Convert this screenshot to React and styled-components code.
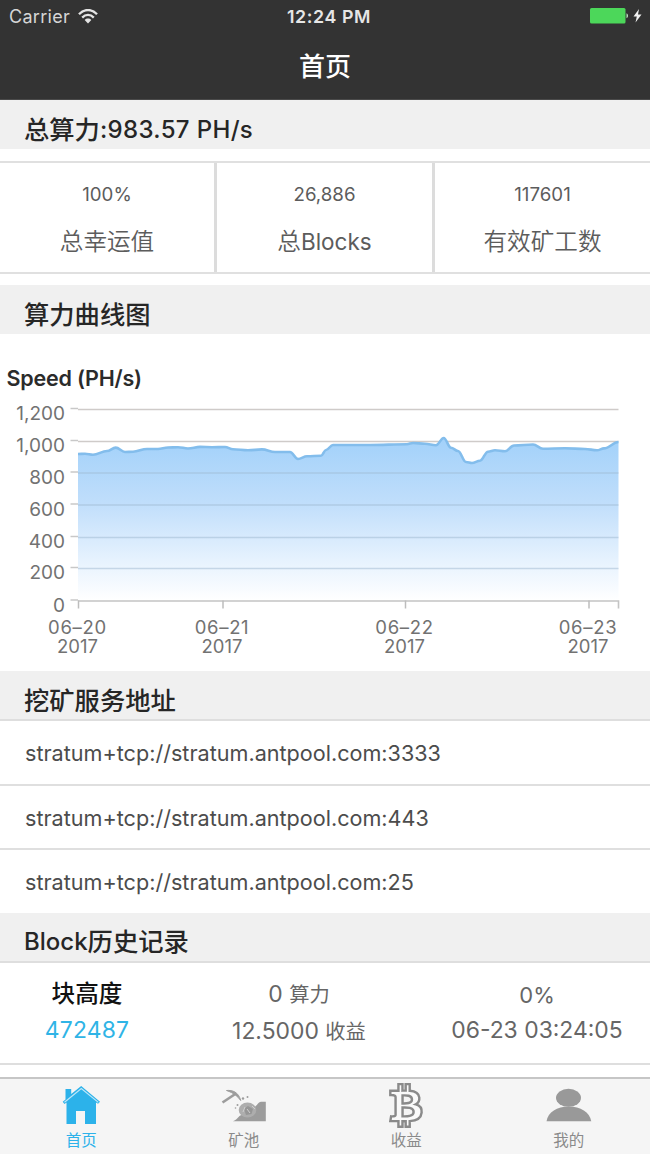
import React from "react";
import styled, { createGlobalStyle } from "styled-components";
import { FaBtc } from "react-icons/fa";

const GlobalStyle = createGlobalStyle`
  * {
    box-sizing: border-box;
  }
  body {
    margin: 0;
    background: #fff;
    font-family: Inter, "Noto Sans CJK SC", sans-serif;
  }
`;

const StyledPage = styled.div`
  display: flex;
  flex-direction: column;
  width: 650px;
  height: 1154px;
  overflow: hidden;
  background: #fff;
`;

const StyledHeader = styled.header`
  height: 100px;
  background: #333;
  color: #fff;
  border-bottom: 1px solid #4a4a4a;
`;

const StyledStatusBar = styled.div`
  display: grid;
  grid-template-columns: 1fr auto 1fr;
  align-items: center;
  height: 32px;
  padding: 0 7px 0 9px;
`;

const StyledCarrier = styled.div`
  display: flex;
  align-items: center;
  column-gap: 8px;
  font-size: 18px;
  letter-spacing: 0.3px;
  color: #d6d6d6;
`;

const StyledClock = styled.div`
  padding-left: 6px;
  font-size: 17.8px;
  font-weight: 600;
  letter-spacing: 0.6px;
  color: #e6e6e6;
`;

const StyledBattery = styled.div`
  display: flex;
  justify-content: flex-end;
`;

const StyledTitle = styled.h1`
  margin: 0;
  font-size: 26px;
  font-weight: 500;
  line-height: 69px;
  text-align: center;
`;

const StyledSectionTitle = styled.h2`
  display: flex;
  align-items: center;
  flex-shrink: 0;
  height: ${(props) => (props.$lined ? 50 : 49)}px;
  margin: 0;
  padding: ${(props) => props.$top || 10}px 24px 0;
  background: #f0f0f0;
  border-bottom: ${(props) => (props.$lined ? "2px solid #dedede" : "none")};
  color: #262626;
  font-size: 25.3px;
  line-height: 36px;
  font-weight: 500;
`;

const StyledTotal = styled.span`
  font-size: 24px;
  font-weight: 500;
  letter-spacing: ${(props) => props.$spacing || 0}px;
`;

const StyledStats = styled.div`
  display: grid;
  grid-template-columns: 217px 218px 215px;
  flex-shrink: 0;
  height: 113px;
  margin: 12px 0 11px;
  border-top: 2px solid #e0e0e0;
  border-bottom: 2px solid #e0e0e0;
`;

const StyledStat = styled.div`
  display: flex;
  flex-direction: column;
  align-items: center;
  padding-top: 19px;
  border-right: 3px solid #dcdcdc;
  color: #5c5c5c;
  &:last-child {
    border-right: none;
  }
`;

const StyledStatValue = styled.span`
  font-size: 18.7px;
  line-height: 26px;
`;

const StyledStatLabel = styled.span`
  margin-top: 16px;
  font-size: 23.6px;
  line-height: 36px;
  font-weight: 350;
`;

const StyledLatin = styled.span`
  font-size: 22.5px;
  font-weight: 400;
`;

const StyledChart = styled.svg`
  display: block;
  flex-shrink: 0;
  font-family: Inter, sans-serif;
`;

const StyledAddress = styled.div`
  flex-shrink: 0;
  height: ${(props) => props.$height}px;
  padding-left: 25px;
  border-bottom: ${(props) => (props.$last ? "none" : "2px solid #dfdfdf")};
  color: #4c4c4c;
  font-size: 21.6px;
  line-height: 64px;
`;

const StyledBlock = styled.div`
  display: grid;
  grid-template-columns: 174px 250px 226px;
  flex-shrink: 0;
  height: 102px;
  padding-top: 13px;
  border-bottom: 2px solid #dedede;
`;

const StyledBlockColumn = styled.div`
  display: flex;
  flex-direction: column;
  align-items: center;
  color: #666;
  font-size: 22.9px;
  line-height: 36px;
  white-space: nowrap;
`;

const StyledBlockTitle = styled.span`
  font-size: 23.6px;
  font-weight: 500;
  color: #111;
`;

const StyledBlockHeight = styled.span`
  color: #2fb4e6;
  letter-spacing: 0.2px;
`;

const StyledPercent = styled.span`
  font-size: 22px;
  line-height: 38px;
  margin-bottom: -2px;
`;

const StyledUnit = styled.span`
  font-size: 20.3px;
`;

const StyledTabBar = styled.nav`
  display: grid;
  grid-template-columns: repeat(4, 1fr);
  flex-shrink: 0;
  height: 78px;
  margin-top: 12px;
  border-top: 2px solid #c6c6c6;
  background: #f5f5f5;
`;

const StyledTab = styled.div`
  display: flex;
  flex-direction: column;
  align-items: center;
  padding-top: 2px;
  color: ${(props) => (props.$active ? "#2cb2ea" : "#8a8a8a")};
  font-size: 15.5px;
  line-height: 18px;
`;

const StyledIconBox = styled.div`
  display: flex;
  justify-content: center;
  align-items: center;
  width: 60px;
  height: 48px;
  margin-bottom: 3px;
`;

const StyledBitcoin = styled(FaBtc)`
  width: 32px;
  height: 43px;
  overflow: visible;
  color: #fafafa;
  stroke: #8a8a8a;
  stroke-width: 29;
`;

const LEFT = 78;
const RIGHT = 618.5;
const BASE = 600.5;

const yTicks = [
  { label: "1,200", y: 409 },
  { label: "1,000", y: 441 },
  { label: "800", y: 472.5 },
  { label: "600", y: 504.5 },
  { label: "400", y: 537 },
  { label: "200", y: 568 },
  { label: "0", y: BASE },
];

const xTicks = [
  { label: "06–20", x: 78 },
  { label: "06–21", x: 222.5 },
  { label: "06–22", x: 405 },
  { label: "06–23", x: 588.5 },
];

const speed = [
  [78, 454], [85, 453.7], [93, 454.7], [107, 451], [115.7, 447.6], [125, 452],
  [133, 451.7], [147, 449], [158, 449], [168, 447.5], [178, 447.2],
  [188, 448.5], [200, 446.9], [212, 447.2], [225, 447], [233, 449.3],
  [248, 450.3], [262, 449.4], [275, 452], [290, 452], [298, 459], [307, 456.3],
  [321, 455.7], [326, 450], [333, 445], [370, 445], [407, 444.2], [413, 443],
  [425, 443.7], [436, 445.3], [443.7, 438], [451, 447.7], [458, 451],
  [466, 462], [472, 463], [480, 460.7], [488, 451.7], [495, 450.3],
  [505, 451.3], [514, 445.5], [533, 444.5], [543, 448.7], [565, 448.3],
  [585, 449], [597, 450.3], [604, 448.4], [618.5, 442],
];

// horizontal control points keep the curve from overshooting
function curve(points) {
  return points.reduce((d, [x, y], i) => {
    if (i === 0) return `M${x} ${y}`;
    const [px, py] = points[i - 1];
    const third = (x - px) * 0.38;
    return `${d}C${px + third} ${py} ${x - third} ${y} ${x} ${y}`;
  }, "");
}

function SpeedChart() {
  const line = curve(speed);
  return (
    <StyledChart width="650" height="337" viewBox="0 334 650 337">
      <defs>
        <linearGradient id="speedFill" x1="0" y1="0" x2="0" y2="1">
          <stop offset="0" stopColor="#a2d1fa" />
          <stop offset="0.4" stopColor="#c0defb" />
          <stop offset="0.75" stopColor="#e6f2fe" />
          <stop offset="1" stopColor="#ffffff" />
        </linearGradient>
      </defs>
      <text x="6.5" y="385.5" fontSize="21.5" fontWeight="600" fill="#2b2b2b" letterSpacing="-0.2">
        Speed (PH/s)
      </text>
      {yTicks.slice(0, 2).map(({ y }) => (
        <path key={y} d={`M${LEFT} ${y + 0.5}H${RIGHT}`} stroke="#cfcbc9" strokeWidth="1.6" />
      ))}
      <path d={`${line}V${BASE}H${LEFT}Z`} fill="url(#speedFill)" />
      {yTicks.slice(2, 6).map(({ y }) => (
        <path key={y} d={`M${LEFT} ${y + 0.5}H${RIGHT}`} stroke="#9eb8cf" strokeOpacity="0.5" strokeWidth="1.5" />
      ))}
      <path d={line} fill="none" stroke="#83bdec" strokeWidth="2.6" />
      {yTicks.map(({ label, y }) => (
        <g key={label}>
          <path d={`M70.5 ${y - 0.5}H${LEFT}`} stroke="#c8c8c8" strokeWidth="1.5" />
          <text x="65" y={y + 11} fontSize="19" fill="#727272" textAnchor="end">
            {label}
          </text>
        </g>
      ))}
      <path d={`M${LEFT} ${BASE + 0.5}H${RIGHT}v7.5`} fill="none" stroke="#c4c4c4" strokeWidth="1.6" />
      {xTicks.map(({ label, x }) => (
        <g key={label} fill="#727272" textAnchor="middle">
          <path d={`M${x + 0.5} ${BASE}v8`} stroke="#bdbdbd" strokeWidth="1.5" />
          <text y="633.5" fontSize="18.5">
            <tspan x={x - 0.5} letterSpacing="0.7">{label}</tspan>
            <tspan x={x - 0.5} dy="19">2017</tspan>
          </text>
        </g>
      ))}
    </StyledChart>
  );
}

function WifiIcon() {
  return (
    <svg width="20" height="15" viewBox="0 0 20 15" fill="none" stroke="#e4e4e4" strokeWidth="2.3">
      <path d="M1 5.2C6-.4 14-.4 19 5.2M4.2 8.6c3.4-3.6 8.2-3.6 11.6 0" />
      <path d="M10 14.5L6.700 11c1.900-1.900 4.700-1.900 6.600 0z" fill="#e4e4e4" stroke="none" />
    </svg>
  );
}

function BatteryIcon() {
  return (
    <svg width="54" height="18" viewBox="0 0 54 18">
      <rect x="1" y="1" width="35.5" height="15.5" rx="1.5" fill="#4cd75a" />
      <path d="M37.5 6.2c2 .8 2 4.200 0 5z" fill="#b9e5bd" />
      <path d="M50 2l-5.500 7.600h3.300L46.500 15.500l6-8h-3.500z" fill="#f2f2f2" />
    </svg>
  );
}

function HomeIcon() {
  return (
    <svg width="60" height="48" viewBox="0 0 60 48">
      <path d="M14.500 8h5.700v5l10-8L49 20.700l-2 2.100-2-1.400V43H34V30h-9v13H15.500V21.600l-2 1.300-1.800-2.200 2.800-2.300z" fill="#2cb2ea" />
      <path d="M13.500 21.200L30.300 7.600 47.300 21.400" fill="none" stroke="#bde6f8" strokeWidth="1.2" />
    </svg>
  );
}

function MineIcon() {
  return (
    <svg width="60" height="48" viewBox="0 0 60 48" fill="#9c9c9c">
      <path d="M8.500 21.500L22 12.500" stroke="#9c9c9c" strokeWidth="2.600" />
      <path d="M12.500 9.500c6-.6 12 1.500 14.200 10-3-4-6.700-7.500-14.200-10z" stroke="#9c9c9c" />
      <path d="M19 40.300c3-1.300 4.500-3 6.500-5.300L39 27c3-1 5-5.800 8-6.300h4.800v19.600z" />
      <ellipse cx="33.500" cy="29" rx="8.800" ry="7.400" fill="#adadad" />
      <path d="M30 27.500l4-2.500 5 3-1.500 5-5.500 1z" fill="#969696" />
      <path d="M29 31l2-5M38 25l3 3M33 28l3 4" stroke="#cfcfcf" />
      <circle cx="23.500" cy="24" r="1" />
      <circle cx="29" cy="17.500" r="1.200" />
      <circle cx="33.500" cy="16" r="1" />
      <circle cx="21.500" cy="27" r=".8" />
    </svg>
  );
}

function UserIcon() {
  return (
    <svg width="60" height="48" viewBox="0 0 60 48" fill="#999">
      <ellipse cx="29.500" cy="16.800" rx="12.500" ry="9" />
      <path d="M7.500 40.200C9 31 18 25.500 29.800 25.500S50.500 31 52.300 40.200z" />
    </svg>
  );
}

const addresses = [
  { url: "stratum+tcp://stratum.antpool.com:3333", height: 65 },
  { url: "stratum+tcp://stratum.antpool.com:443", height: 64 },
  { url: "stratum+tcp://stratum.antpool.com:25", height: 63 },
];

const tabs = [
  { label: "首页", icon: <HomeIcon />, active: true },
  { label: "矿池", icon: <MineIcon /> },
  { label: "收益", icon: <StyledBitcoin /> },
  { label: "我的", icon: <UserIcon /> },
];

export default function App() {
  return (
    <StyledPage>
      <GlobalStyle />
      <StyledHeader>
        <StyledStatusBar>
          <StyledCarrier>
            Carrier
            <WifiIcon />
          </StyledCarrier>
          <StyledClock>12:24 PM</StyledClock>
          <StyledBattery>
            <BatteryIcon />
          </StyledBattery>
        </StyledStatusBar>
        <StyledTitle>首页</StyledTitle>
      </StyledHeader>

      <StyledSectionTitle>
        总算力<StyledTotal $spacing={0.35}>:983.57 PH/s</StyledTotal>
      </StyledSectionTitle>
      <StyledStats>
        <StyledStat>
          <StyledStatValue>100%</StyledStatValue>
          <StyledStatLabel>总幸运值</StyledStatLabel>
        </StyledStat>
        <StyledStat>
          <StyledStatValue>26,886</StyledStatValue>
          <StyledStatLabel>
            总<StyledLatin>Blocks</StyledLatin>
          </StyledStatLabel>
        </StyledStat>
        <StyledStat>
          <StyledStatValue>117601</StyledStatValue>
          <StyledStatLabel>有效矿工数</StyledStatLabel>
        </StyledStat>
      </StyledStats>

      <StyledSectionTitle>算力曲线图</StyledSectionTitle>
      <SpeedChart />

      <StyledSectionTitle $lined $top={11}>
        挖矿服务地址
      </StyledSectionTitle>
      {addresses.map(({ url, height }, i) => (
        <StyledAddress key={url} $height={height} $last={i === 2}>
          {url}
        </StyledAddress>
      ))}

      <StyledSectionTitle $lined $top={9}>
        <StyledTotal>Block</StyledTotal>历史记录
      </StyledSectionTitle>
      <StyledBlock>
        <StyledBlockColumn>
          <StyledBlockTitle>块高度</StyledBlockTitle>
          <StyledBlockHeight>472487</StyledBlockHeight>
        </StyledBlockColumn>
        <StyledBlockColumn>
          <span>
            0 <StyledUnit>算力</StyledUnit>
          </span>
          <span>
            12.5000 <StyledUnit>收益</StyledUnit>
          </span>
        </StyledBlockColumn>
        <StyledBlockColumn>
          <StyledPercent>0%</StyledPercent>
          <span>06-23 03:24:05</span>
        </StyledBlockColumn>
      </StyledBlock>

      <StyledTabBar>
        {tabs.map(({ label, icon, active }) => (
          <StyledTab key={label} $active={active}>
            <StyledIconBox>{icon}</StyledIconBox>
            {label}
          </StyledTab>
        ))}
      </StyledTabBar>
    </StyledPage>
  );
}
